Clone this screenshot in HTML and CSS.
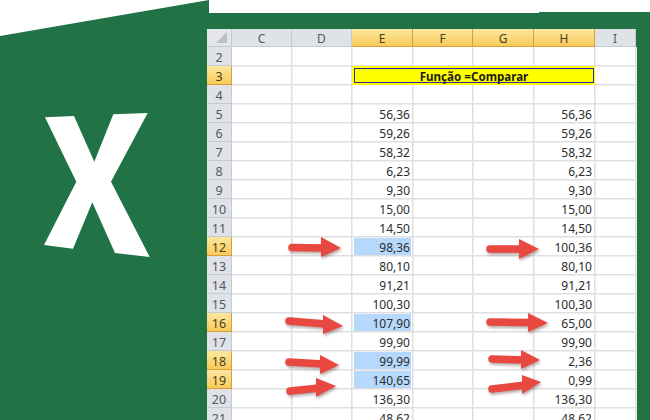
FILE: index.html
```html
<!DOCTYPE html>
<html lang="pt">
<head>
<meta charset="utf-8">
<title>Função Comparar</title>
<link rel="stylesheet" href="styles.css">
</head>
<body>
<div class="page">
  <div class="logo-panel">
    <svg class="logo" viewBox="44 113 106 144" aria-hidden="true"><polygon fill="#fff" points="45,117.3 74,116 94.3,161.7 113.3,114.3 147.7,113 111,181.7 149.7,257 115,253 92.3,202.3 73,248.7 44,245 76.3,181.7"/></svg>
  </div>
  <div class="sheet">
    <div class="corner"></div><div class="col">C</div><div class="col">D</div><div class="col on">E</div><div class="col on">F</div><div class="col on">G</div><div class="col on">H</div><div class="col">I</div>

    <div class="row">2</div><div class="cell"></div><div class="cell"></div><div class="cell"></div><div class="cell"></div><div class="cell"></div><div class="cell"></div><div class="cell"></div>

    <div class="row on">3</div><div class="cell"></div><div class="cell"></div><div class="title"><span class="title-box">Função =Comparar</span></div><div class="cell"></div>

    <div class="row">4</div><div class="cell"></div><div class="cell"></div><div class="cell"></div><div class="cell"></div><div class="cell"></div><div class="cell"></div><div class="cell"></div>

    <div class="row">5</div><div class="cell"></div><div class="cell"></div><div class="cell">56,36</div><div class="cell"></div><div class="cell"></div><div class="cell">56,36</div><div class="cell"></div>

    <div class="row">6</div><div class="cell"></div><div class="cell"></div><div class="cell">59,26</div><div class="cell"></div><div class="cell"></div><div class="cell">59,26</div><div class="cell"></div>

    <div class="row">7</div><div class="cell"></div><div class="cell"></div><div class="cell">58,32</div><div class="cell"></div><div class="cell"></div><div class="cell">58,32</div><div class="cell"></div>

    <div class="row">8</div><div class="cell"></div><div class="cell"></div><div class="cell">6,23</div><div class="cell"></div><div class="cell"></div><div class="cell">6,23</div><div class="cell"></div>

    <div class="row">9</div><div class="cell"></div><div class="cell"></div><div class="cell">9,30</div><div class="cell"></div><div class="cell"></div><div class="cell">9,30</div><div class="cell"></div>

    <div class="row">10</div><div class="cell"></div><div class="cell"></div><div class="cell">15,00</div><div class="cell"></div><div class="cell"></div><div class="cell">15,00</div><div class="cell"></div>

    <div class="row">11</div><div class="cell"></div><div class="cell"></div><div class="cell">14,50</div><div class="cell"></div><div class="cell"></div><div class="cell">14,50</div><div class="cell"></div>

    <div class="row on">12</div><div class="cell"></div><div class="cell"></div><div class="cell"><span class="hit">98,36</span></div><div class="cell"></div><div class="cell"></div><div class="cell">100,36</div><div class="cell"></div>

    <div class="row">13</div><div class="cell"></div><div class="cell"></div><div class="cell">80,10</div><div class="cell"></div><div class="cell"></div><div class="cell">80,10</div><div class="cell"></div>

    <div class="row">14</div><div class="cell"></div><div class="cell"></div><div class="cell">91,21</div><div class="cell"></div><div class="cell"></div><div class="cell">91,21</div><div class="cell"></div>

    <div class="row">15</div><div class="cell"></div><div class="cell"></div><div class="cell">100,30</div><div class="cell"></div><div class="cell"></div><div class="cell">100,30</div><div class="cell"></div>

    <div class="row on">16</div><div class="cell"></div><div class="cell"></div><div class="cell"><span class="hit">107,90</span></div><div class="cell"></div><div class="cell"></div><div class="cell">65,00</div><div class="cell"></div>

    <div class="row">17</div><div class="cell"></div><div class="cell"></div><div class="cell">99,90</div><div class="cell"></div><div class="cell"></div><div class="cell">99,90</div><div class="cell"></div>

    <div class="row on">18</div><div class="cell"></div><div class="cell"></div><div class="cell"><span class="hit">99,99</span></div><div class="cell"></div><div class="cell"></div><div class="cell">2,36</div><div class="cell"></div>

    <div class="row on">19</div><div class="cell"></div><div class="cell"></div><div class="cell"><span class="hit">140,65</span></div><div class="cell"></div><div class="cell"></div><div class="cell">0,99</div><div class="cell"></div>

    <div class="row">20</div><div class="cell"></div><div class="cell"></div><div class="cell">136,30</div><div class="cell"></div><div class="cell"></div><div class="cell">136,30</div><div class="cell"></div>

    <div class="row">21</div><div class="cell"></div><div class="cell"></div><div class="cell">48,62</div><div class="cell"></div><div class="cell"></div><div class="cell">48,62</div><div class="cell"></div>
  </div>
  <svg class="arrows" viewBox="0 0 650 420" aria-hidden="true">
    <g class="arrow"><path class="shaft" d="M292 247.5 L325 248"/><polygon class="head" points="321,237 341,248 321,257"/></g>
    <g class="arrow"><path class="shaft" d="M289 321 L326 324"/><polygon class="head" points="323,315 343,326 323,334"/></g>
    <g class="arrow"><path class="shaft" d="M289 362 L323 364"/><polygon class="head" points="320,355 339,365 320,374"/></g>
    <g class="arrow"><path class="shaft" d="M290 391 L319 388"/><polygon class="head" points="316,378 336,386 316,397"/></g>
    <g class="arrow"><path class="shaft" d="M490 249 L522 249"/><polygon class="head" points="519,239 539,249 519,259"/></g>
    <g class="arrow"><path class="shaft" d="M490 322 L531 322.5"/><polygon class="head" points="528,313 548,323 528,332"/></g>
    <g class="arrow"><path class="shaft" d="M492 359 L524 360"/><polygon class="head" points="521,350 540,360 521,369"/></g>
    <g class="arrow"><path class="shaft" d="M492 389 L525 385"/><polygon class="head" points="522,375 541,382 522,394"/></g>
  </svg>
</div>
</body>
</html>
```
FILE: styles.css
```css
html, body {
  margin: 0;
  padding: 0;
  background: #fff;
  overflow: hidden;
}

.page {
  position: relative;
  isolation: isolate;
  display: flex;
  width: 650px;
  height: 420px;
  overflow: hidden;
  font-family: "Noto Sans", "Liberation Sans", sans-serif;
  color: #2c2c2c;
}

.page::before {
  content: "";
  position: absolute;
  inset: 0;
  z-index: -1;
  background: #217346;
  clip-path: polygon(0 36px, 209px 0, 209px 13px, 539px 13px, 539px 12px, 650px 12px, 650px 420px, 0 420px);
}

.logo-panel {
  flex: 0 0 207px;
  padding: 113px 0 0 44px;
  box-sizing: border-box;
}

.logo {
  display: block;
  width: 106px;
  height: 144px;
}

.sheet {
  flex: 0 0 429px;
  align-self: flex-start;
  margin-top: 29px;
  display: grid;
  grid-template-columns: 25px 60px 60px 61px 60px 61px 61px 41px;
  grid-template-rows: 18px;
  grid-auto-rows: 19px;
  background: #fff;
  font-size: 12px;
}

.corner,
.col,
.row {
  box-sizing: border-box;
  display: flex;
  align-items: center;
  justify-content: center;
  padding-top: 2px;
  background: #dfe2e7;
  border-right: 1px solid #c6c9ce;
  border-bottom: 1px solid #c6c9ce;
  color: #55585d;
}

.row {
  padding-top: 3px;
  font-size: 12.5px;
}

.col.on,
.row.on {
  background: linear-gradient(#fce79f, #f8cb5a);
  border-color: #d79f3c;
  color: #4b3f1e;
}

.corner {
  justify-content: flex-end;
  padding: 0 4px 0 0;
  background: #e4e6ea;
}

.corner::after {
  content: "";
  width: 11px;
  height: 11px;
  background: #bcc0c4;
  clip-path: polygon(100% 0, 100% 100%, 0 100%);
}

.cell {
  box-sizing: border-box;
  display: flex;
  align-items: center;
  justify-content: flex-end;
  padding: 3px 2px 0 0;
  border-right: 1px solid #dedfe0;
  border-bottom: 1px solid #dedfe0;
  box-shadow: 1px 0 0 #eeeeef, 0 1px 0 #eeeeef;
}

.cell:has(.hit) {
  padding: 0;
}

.hit {
  flex: 1;
  align-self: stretch;
  margin: 1px 1px 0 2px;
  padding-right: 1px;
  background: #b6d8fc;
  text-align: right;
  line-height: 19px;
}

.title {
  grid-column: span 4;
  background: #ff0;
  padding: 2px 1px 2px 2px;
  box-sizing: border-box;
  display: flex;
}

.title-box {
  flex: 1;
  box-sizing: border-box;
  padding-top: 2px;
  border: 1px solid #2a2aa8;
  display: flex;
  align-items: center;
  justify-content: center;
  font-size: 11.6px;
  font-weight: 700;
  color: #1c1c10;
}

.arrows {
  position: absolute;
  inset: 0;
  width: 650px;
  height: 420px;
  pointer-events: none;
}

.arrow {
  filter: drop-shadow(1px 2px 1.5px rgba(90, 60, 60, .45));
}

.shaft {
  fill: none;
  stroke: #e8483f;
  stroke-width: 7.5;
  stroke-linecap: round;
}

.head {
  fill: #e8483f;
}
```
